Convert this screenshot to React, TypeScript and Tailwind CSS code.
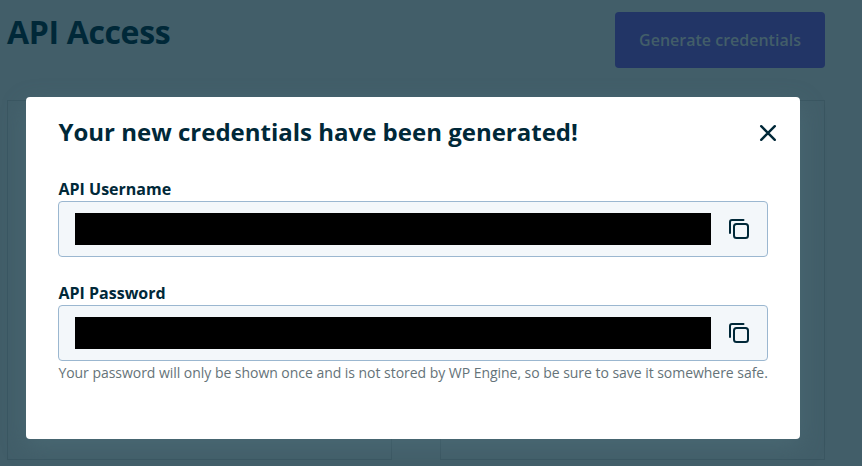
import React from "react";

function CopyIcon() {
  return (
    <svg width="24" height="24" viewBox="0 0 24 24" fill="none" stroke="#002838" strokeWidth="2" strokeLinecap="round" strokeLinejoin="round">
      <rect x="7" y="7" width="14" height="14" rx="2.5" />
      <path d="M3 16V5a2 2 0 0 1 2-2h11.5" />
    </svg>
  );
}

function Field({ label }: { label: string }) {
  return (
    <div>
      <div className="h-6 pl-[0.5px] text-base leading-6 font-bold whitespace-nowrap">{label}</div>
      <div className="flex h-14 items-center justify-between rounded-[4px] border border-[#9bb7d0] bg-[#f3f7fa] pr-4 pl-4">
        <div className="h-8 w-[636px] bg-black" />
        <button aria-label={"Copy " + label} className="flex">
          <CopyIcon />
        </button>
      </div>
    </div>
  );
}

export default function App() {
  return (
    <div className="relative h-[466px] w-[862px] overflow-hidden bg-[#425e69] font-['Open_Sans',sans-serif] text-[#002838]">
      <header className="flex h-[100px] items-start justify-between pr-[37px] pl-[7px]">
        <h1 className="pt-[8px] text-[32px] leading-[48px] font-bold tracking-[-0.35px] whitespace-nowrap">API Access</h1>
        <button className="mt-3 h-14 w-[210px] rounded-[4px] bg-[#223566] text-base font-semibold whitespace-nowrap text-[#425e69]">
          Generate credentials
        </button>
      </header>
      <main className="flex justify-between pr-[37px] pl-[7px]">
        <div className="h-[360px] w-[385px] border border-[#3a5661]" />
        <div className="h-[360px] w-[385px] border border-[#3a5661]" />
      </main>

      <section
        role="dialog"
        className="absolute top-[97px] left-[26px] h-[342px] w-[774px] rounded-[4px] bg-white px-8 pt-4 shadow-[0_8px_24px_rgba(84,120,130,0.4)]"
      >
        <div className="mr-[-12px] flex h-10 items-center justify-between">
          <h2 className="-mt-[2px] pl-[0.5px] text-2xl leading-10 font-bold whitespace-nowrap">Your new credentials have been generated!</h2>
          <button aria-label="Close" className="flex">
            <svg width="24" height="24" viewBox="0 0 24 24" fill="none" stroke="#002838" strokeWidth="2.4" strokeLinecap="round">
              <path d="M5.2 5.2l13.6 13.6M18.8 5.2L5.2 18.8" />
            </svg>
          </button>
        </div>
        <div className="mt-6 flex flex-col gap-6">
          <Field label="API Username" />
          <Field label="API Password" />
        </div>
        <p className="pl-[0.4px] text-sm leading-6 tracking-[-0.036px] whitespace-nowrap text-[#657379]">
          Your password will only be shown once and is not stored by WP Engine, so be sure to save it somewhere safe.
        </p>
      </section>
    </div>
  );
}
